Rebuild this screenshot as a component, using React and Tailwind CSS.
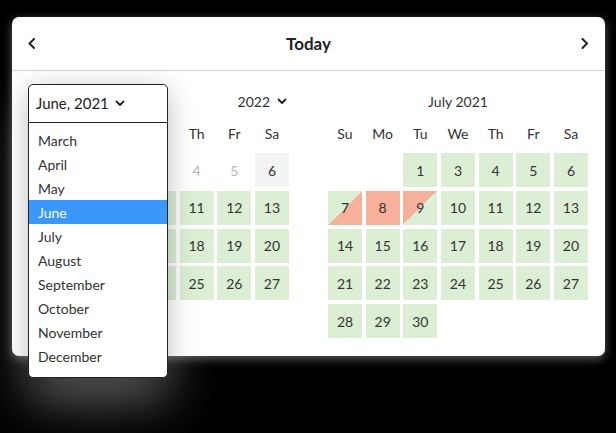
import React from "react";

const GREEN = "bg-[#dcefd5]";

function Chevron({ dir }) {
  const d = dir === "left" ? "M6 1 L1.5 5.5 L6 10" : "M1.5 1 L6 5.5 L1.5 10";
  return (
    <svg width="8" height="11" viewBox="0 0 8 11" fill="none">
      <path d={d} stroke="#222" strokeWidth="2" strokeLinecap="round" strokeLinejoin="round" />
    </svg>
  );
}

function Down() {
  return (
    <svg width="10" height="7" viewBox="0 0 10 7" fill="none">
      <path d="M1.5 1.5 L5 5 L8.5 1.5" stroke="#222" strokeWidth="1.8" strokeLinecap="round" strokeLinejoin="round" />
    </svg>
  );
}

const WEEK = ["Su", "Mo", "Tu", "We", "Th", "Fr", "Sa"];

function Cell({ c }) {
  if (!c) return <div className="h-[34px]" />;
  const { n, t } = c;
  let cls = "h-[34px] flex items-center justify-center text-[14px] text-[#333] ";
  if (t === "g") cls += GREEN;
  else if (t === "r") cls += "bg-[#f7b19b]";
  else if (t === "gr") cls += "bg-[linear-gradient(to_top_left,#f7b19b_50%,#dcefd5_50%)]";
  else if (t === "rg") cls += "bg-[linear-gradient(to_bottom_right,#f7b19b_50%,#dcefd5_50%)]";
  else if (t === "grey") cls += "bg-[#f3f3f3]";
  else if (t === "muted") cls = "h-[34px] flex items-center justify-center text-[14px] text-[#b5b5b5]";
  return <div className={cls}>{n}</div>;
}

function Grid({ cells }) {
  return (
    <div className="grid grid-cols-[repeat(7,34px)] gap-x-[3.67px] gap-y-[3.8px]">
      {cells.map((c, i) => (
        <Cell key={i} c={c} />
      ))}
    </div>
  );
}

function WeekRow({ labels }) {
  return (
    <div className="grid grid-cols-[repeat(7,34px)] gap-x-[3.67px] h-[20px] mt-[12px] mb-[10px]">
      {labels.map((w, i) => (
        <div key={i} className="flex items-center justify-center text-[14px] text-[#333]">
          {w}
        </div>
      ))}
    </div>
  );
}

const g = (n) => ({ n, t: "g" });
const h = { n: "", t: "g" };

const leftCells = [
  null, null, null, null, { n: 4, t: "muted" }, { n: 5, t: "muted" }, { n: 6, t: "grey" },
  h, h, h, h, g(11), g(12), g(13),
  h, h, h, h, g(18), g(19), g(20),
  h, h, h, h, g(25), g(26), g(27),
  null, null, null, null, null, null, null,
];

const rightCells = [
  null, null, g(1), g(3), g(4), g(5), g(6),
  { n: 7, t: "gr" }, { n: 8, t: "r" }, { n: 9, t: "rg" }, g(10), g(11), g(12), g(13),
  g(14), g(15), g(16), g(17), g(18), g(19), g(20),
  g(21), g(22), g(23), g(24), g(25), g(26), g(27),
  g(28), g(29), g(30), null, null, null, null,
];

const MONTHS = ["March", "April", "May", "June", "July", "August", "September", "October", "November", "December"];

export default function App() {
  return (
    <div className="relative w-[616px] h-[433px] bg-black overflow-hidden pt-[17px] pl-[12px] font-['Lato','Noto_Sans',sans-serif]">
      {/* glow behind dropdown */}
      <div className="absolute left-[28px] top-[84px] w-[140px] h-[294px] rounded-[6px] shadow-[0_22px_50px_rgba(255,255,255,0.4)]" />
      <div className="relative z-10 w-[593px] bg-white rounded-[7px] shadow-[0_3px_10px_rgba(255,255,255,0.35)]">
        {/* header */}
        <div className="h-[54px] flex items-center justify-between px-[16px] border-b border-[#d6d6d6]">
          <Chevron dir="left" />
          <div className="text-[17px] font-bold text-[#222] pt-[1px]">Today</div>
          <Chevron dir="right" />
        </div>
        {/* body */}
        <div className="flex pt-[20px] pb-[18px] px-[17px] gap-[39px]">
          <div className="w-[260px]">
            <div className="h-[20px] flex items-center justify-end pr-[2px] gap-[7px] text-[14px] text-[#333]">
              <span>2022</span>
              <Down />
            </div>
            <WeekRow labels={["", "", "", "", "Th", "Fr", "Sa"]} />
            <Grid cells={leftCells} />
          </div>
          <div className="w-[260px]">
            <div className="h-[20px] flex items-center justify-center text-[14px] text-[#333]">July 2021</div>
            <WeekRow labels={WEEK} />
            <Grid cells={rightCells} />
          </div>
        </div>
        {/* dropdown */}
        <div className="absolute z-20 left-[16px] top-[67px] w-[140px] h-[294px] bg-white border border-[#222] rounded-[5px] shadow-[0_6px_28px_rgba(0,0,0,0.26)] flex flex-col overflow-hidden">
          <div className="h-[38px] shrink-0 border-b border-[#222] flex items-center pl-[7px] gap-[6px] text-[15px] text-[#222]">
            <span>June, 2021</span>
            <Down />
          </div>
          <div className="pt-[5px]">
            {MONTHS.map((m) => (
              <div
                key={m}
                className={
                  "h-[24px] flex items-center pl-[9px] text-[14px] " +
                  (m === "June" ? "bg-[#3a97fb] text-white" : "text-[#333]")
                }
              >
                {m}
              </div>
            ))}
          </div>
        </div>
      </div>
    </div>
  );
}
